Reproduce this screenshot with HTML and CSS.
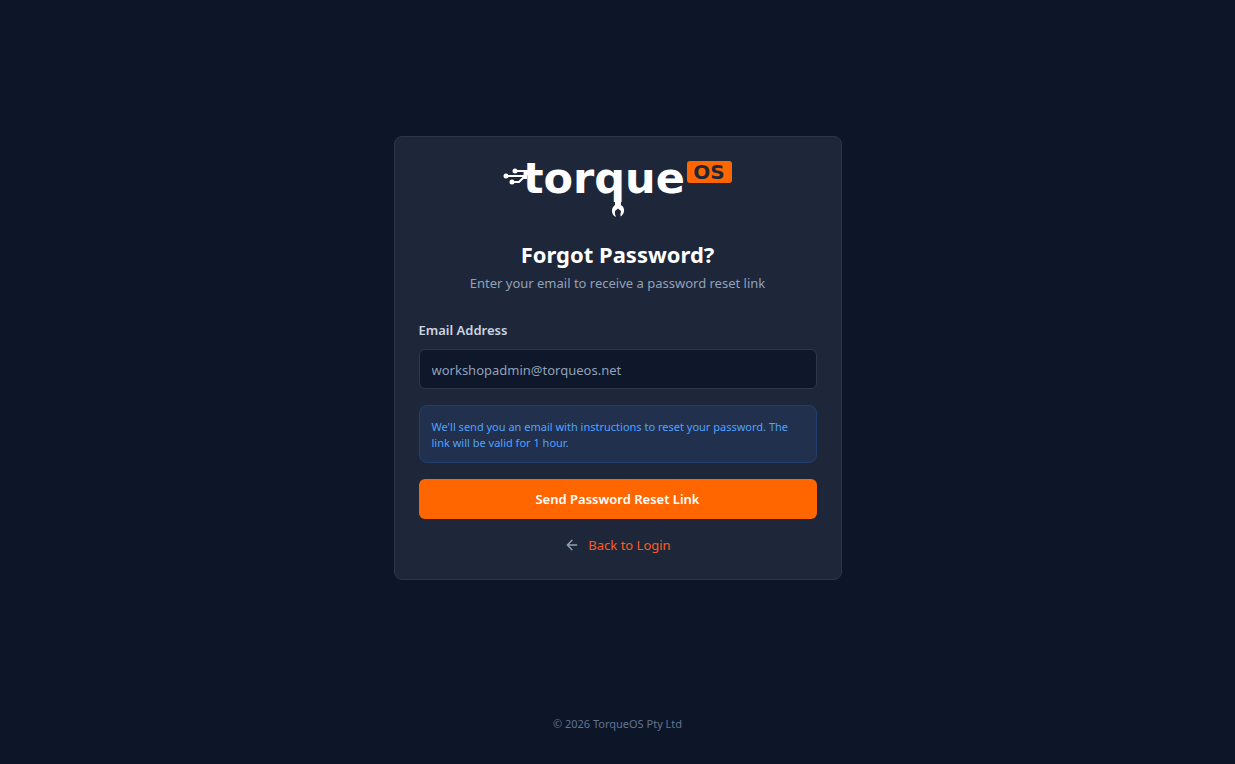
FILE: index.html
```html
<!DOCTYPE html>
<html lang="en">
<head>
    <meta charset="UTF-8">
    <meta name="viewport" content="width=device-width, initial-scale=1.0">
    <title>Forgot Password - TorqueOS</title>
    <link rel="stylesheet" href="styles.css">
</head>
<body>
    <main class="auth-page">
        <div class="auth-card">
            <svg class="logo" viewBox="0 0 230 56" role="img" aria-label="TorqueOS">
                <!-- circuit traces -->
                <g class="logo-trace">
                    <path d="M3 15H24M12 10H24M9 21H16L20 17H24"/>
                </g>
                <g class="logo-fill">
                    <circle cx="3" cy="15" r="2.500"/>
                    <circle cx="12" cy="10" r="2.500"/>
                    <circle cx="9" cy="21" r="2.500"/>
                </g>
                <text class="logo-word" x="20" y="32">torque</text>
                <!-- wrench hanging from the q -->
                <path class="logo-fill" d="M112 36H118V44C120.500 45.500 121.500 48 121 50.500C120.500 53 119 54.500 117.500 55.500V53L118 50L115 47.500L112 50V53L113 56C110.500 55 109 53 109 50C109 47 110 45.500 112 44Z"/>
                <rect class="logo-badge" x="184" y="0" width="45" height="22" rx="3"/>
                <text class="logo-os" x="206" y="18">OS</text>
            </svg>
            <div class="card-header">
                <h1>Forgot Password?</h1>
                <p>Enter your email to receive a password reset link</p>
            </div>
            <form class="reset-form">
                <div class="field">
                    <label for="email">Email Address</label>
                    <input type="email" id="email" name="email" placeholder="workshopadmin@torqueos.net">
                </div>
                <p class="info-box">We'll send you an email with instructions to reset your password. The link will be valid for 1 hour.</p>
                <button type="submit" class="submit-btn">Send Password Reset Link</button>
                <div class="back-row">
                    <svg class="back-icon" viewBox="0 0 24 24" aria-hidden="true"><path d="m12 19-7-7 7-7M19 12H5"/></svg>
                    <a href="#">Back to Login</a>
                </div>
            </form>
        </div>
    </main>
    <footer class="page-footer">© 2026 TorqueOS Pty Ltd</footer>
</body>
</html>
```
FILE: styles.css
```css
* { box-sizing: border-box; }
body {
    margin: 0;
    min-height: 100vh;
    display: flex;
    flex-direction: column;
    background-color: #0d1628;
    color: #fff;
    font-family: "Segoe UI", "Noto Sans", sans-serif;
    font-size: 13px;
    line-height: 20px;
}
h1, p { margin: 0; }

.auth-page { flex: 1; display: flex; align-items: center; justify-content: center; }
.auth-card {
    width: 100%;
    max-width: 448px;
    padding: 24px;
    background-color: #1e2739;
    border: 1px solid #2a3649;
    border-radius: 8px;
}

.logo { display: block; width: 230px; height: 56px; margin: 0 auto 24px; overflow: visible; }
.logo-fill { fill: #fff; }
.logo-trace { fill: none; stroke: #fff; stroke-width: 2; }
.logo-word { fill: #fff; font: bold 43px "DejaVu Sans", sans-serif; }
.logo-badge { fill: #ff6600; }
.logo-os { fill: #1e2739; font: bold 20px "DejaVu Sans", sans-serif; text-anchor: middle; }

.card-header { display: grid; gap: 6px; text-align: center; margin-bottom: 27px; }
.card-header h1 { font-size: 22px; line-height: 26px; font-weight: bold; }
.card-header p { color: #90a1b9; }

.reset-form { display: flex; flex-direction: column; gap: 16px; }
.field { display: flex; flex-direction: column; gap: 9px; }
.field label { color: #cad5e2; font-weight: 600; }
.field input {
    width: 100%;
    height: 40px;
    padding: 1px 12px 0;
    background-color: #0f172a;
    border: 1px solid #2c394d;
    border-radius: 6px;
    color: #fff;
    font: inherit;
}
.field input::placeholder { color: #90a1b9; }
.info-box {
    padding: 13px 12px 11px;
    background-color: #21304c;
    border: 1px solid #243f6f;
    border-radius: 8px;
    color: #51a2ff;
    font-size: 11px;
    line-height: 16px;
}
.submit-btn {
    height: 40px;
    background-color: #ff6600;
    border: none;
    border-radius: 6px;
    color: #fff;
    font: inherit;
    font-weight: 600;
    cursor: pointer;
}
.back-row { display: flex; align-items: center; justify-content: center; gap: 8px; }
.back-row a { color: #ff5a1f; text-decoration: none; }
.back-icon { width: 16px; height: 16px; fill: none; stroke: #90a1b9; stroke-width: 2; stroke-linecap: round; stroke-linejoin: round; }

.page-footer { padding-bottom: 32px; text-align: center; color: #62748e; font-size: 11px; line-height: 16px; }
```
